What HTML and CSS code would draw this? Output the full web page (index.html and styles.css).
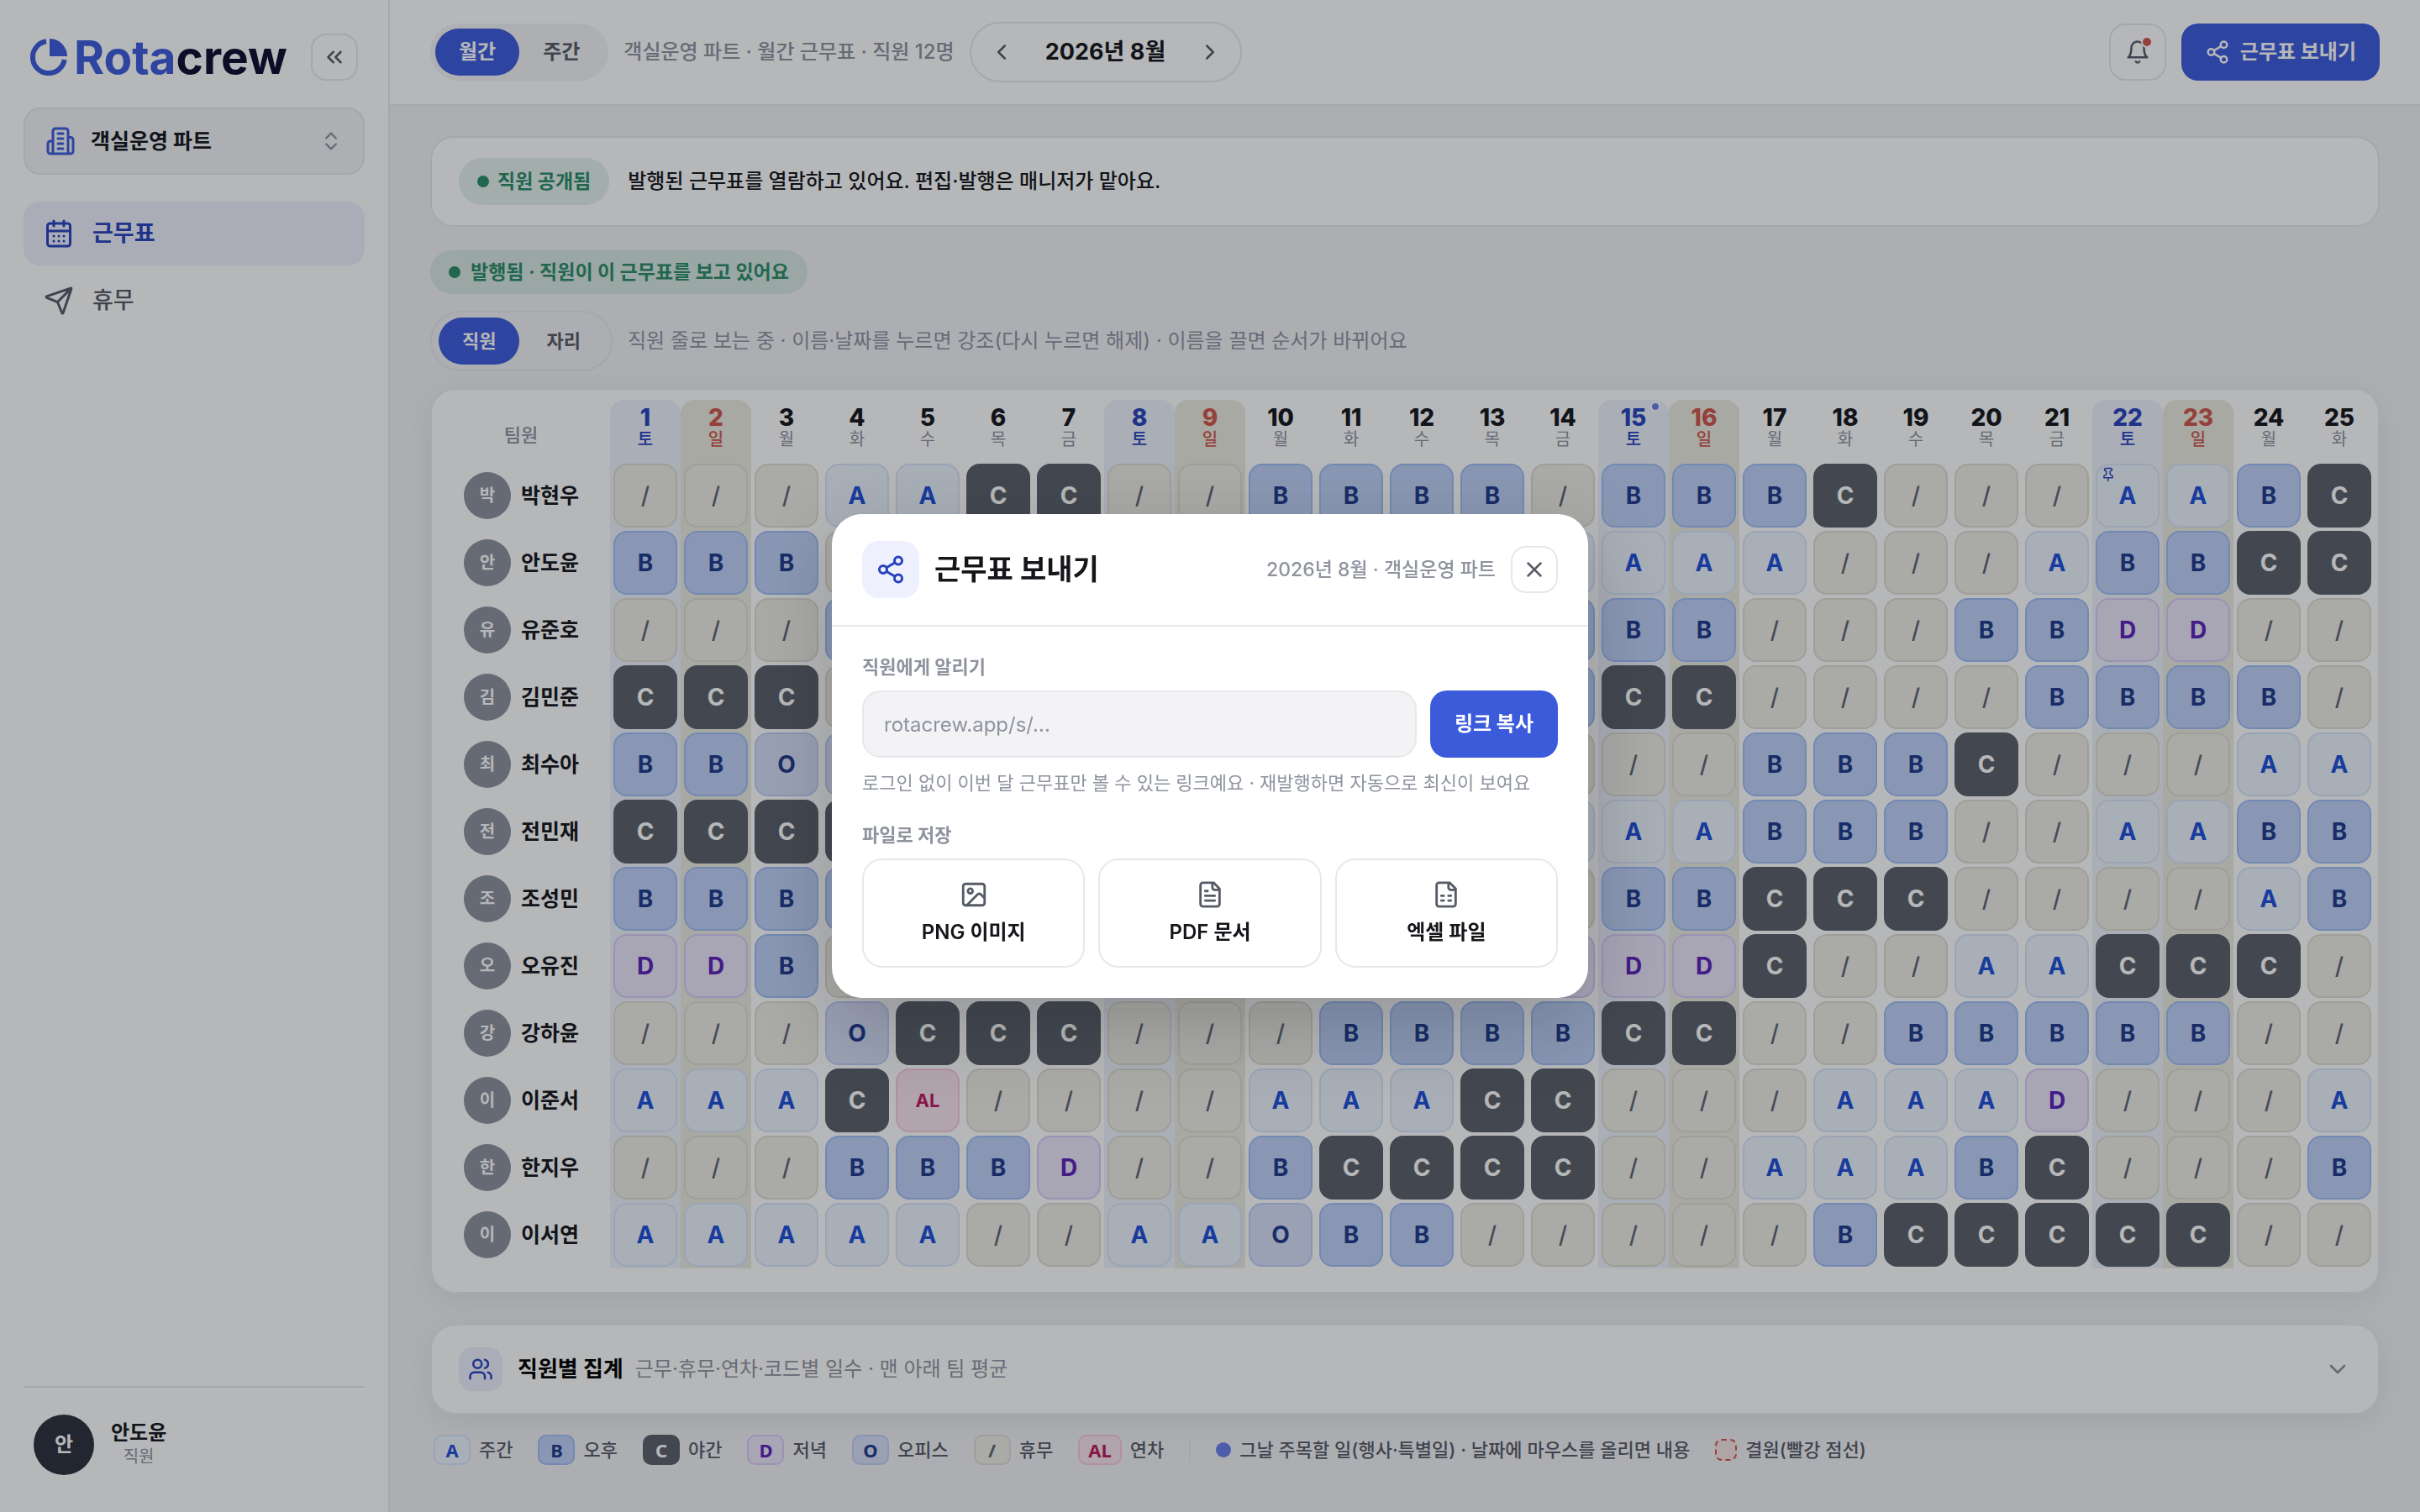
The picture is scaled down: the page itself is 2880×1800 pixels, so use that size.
FILE: index.html
```html
<!DOCTYPE html>
<html lang="ko">
<head>
  <meta charset="UTF-8" />
  <meta name="viewport" content="width=device-width, initial-scale=1" />
  <title>Rotacrew - 근무표</title>
  <link rel="stylesheet" href="styles.css">
</head>
<body>

<svg width="0" height="0" class="sprite" aria-hidden="true">
  <symbol id="i-share" viewBox="0 0 24 24"><circle cx="18" cy="5" r="3"/><circle cx="6" cy="12" r="3"/><circle cx="18" cy="19" r="3"/><path d="M8.6 13.5l6.8 4M15.4 6.5l-6.8 4"/></symbol>
  <symbol id="i-building" viewBox="0 0 24 24"><path d="M6 22V4a2 2 0 0 1 2-2h8a2 2 0 0 1 2 2v18zM6 12H4a2 2 0 0 0-2 2v6a2 2 0 0 0 2 2h2M18 9h2a2 2 0 0 1 2 2v9a2 2 0 0 1-2 2h-2M10 6h4M10 10h4M10 14h4M10 18h4"/></symbol>
  <symbol id="i-updown" viewBox="0 0 24 24"><path d="M7 15l5 5 5-5M7 9l5-5 5 5"/></symbol>
  <symbol id="i-calendar" viewBox="0 0 24 24"><rect x="3" y="4" width="18" height="18" rx="2"/><path d="M8 2v4M16 2v4M3 10h18M8 14h.01M12 14h.01M16 14h.01M8 18h.01M12 18h.01M16 18h.01"/></symbol>
  <symbol id="i-send" viewBox="0 0 24 24"><path d="M14.5 21.7a.5.5 0 0 0 .9 0l6.500-19a.5.5 0 0 0-.6-.6l-19 6.500a.5.5 0 0 0 0 .9l7.900 3.200a2 2 0 0 1 1.100 1.100zM21.900 2.100l-10.900 10.900"/></symbol>
  <symbol id="i-collapse" viewBox="0 0 24 24"><path d="M11 17l-5-5 5-5M18 17l-5-5 5-5"/></symbol>
  <symbol id="i-left" viewBox="0 0 24 24"><path d="M15 18l-6-6 6-6"/></symbol>
  <symbol id="i-right" viewBox="0 0 24 24"><path d="M9 18l6-6-6-6"/></symbol>
  <symbol id="i-down" viewBox="0 0 24 24"><path d="M6 9l6 6 6-6"/></symbol>
  <symbol id="i-bell" viewBox="0 0 24 24"><path d="M6 8a6 6 0 0 1 12 0c0 7 3 9 3 9H3s3-2 3-9M10.300 21a1.940 1.940 0 0 0 3.400 0"/></symbol>
  <symbol id="i-users" viewBox="0 0 24 24"><path d="M16 21v-2a4 4 0 0 0-4-4H6a4 4 0 0 0-4 4v2"/><circle cx="9" cy="7" r="4"/><path d="M22 21v-2a4 4 0 0 0-3-3.900M16 3.100a4 4 0 0 1 0 7.800"/></symbol>
  <symbol id="i-close" viewBox="0 0 24 24"><path d="M18 6L6 18M6 6l12 12"/></symbol>
  <symbol id="i-image" viewBox="0 0 24 24"><rect x="3" y="3" width="18" height="18" rx="2"/><circle cx="9" cy="9" r="2"/><path d="M21 15l-3.100-3.100a2 2 0 0 0-2.800 0L6 21"/></symbol>
  <symbol id="i-doc" viewBox="0 0 24 24"><path d="M15 2H6a2 2 0 0 0-2 2v16a2 2 0 0 0 2 2h12a2 2 0 0 0 2-2V7zM14 2v4a2 2 0 0 0 2 2h4M10 9H8M16 13H8M16 17H8"/></symbol>
  <symbol id="i-sheet" viewBox="0 0 24 24"><path d="M15 2H6a2 2 0 0 0-2 2v16a2 2 0 0 0 2 2h12a2 2 0 0 0 2-2V7zM14 2v4a2 2 0 0 0 2 2h4M8 13h2M14 13h2M8 17h2M14 17h2"/></symbol>
  <symbol id="i-pin" viewBox="0 0 24 24"><path d="M12 17v5M9 10.800a2 2 0 0 1-1.100 1.800l-1.800.9A2 2 0 0 0 5 15.200V16a1 1 0 0 0 1 1h12a1 1 0 0 0 1-1v-.8a2 2 0 0 0-1.100-1.700l-1.800-.9A2 2 0 0 1 15 10.800V7a1 1 0 0 1 1-1 2 2 0 0 0 0-4H8a2 2 0 0 0 0 4 1 1 0 0 1 1 1z"/></symbol>
</svg>

<div class="app">
  <aside class="sidebar">
    <div class="brand">
      <svg class="brand-mark" viewBox="0 0 44 44" aria-hidden="true">
        <path d="M19 3.300A19 19 0 1 0 40.700 25" fill="none" stroke="currentColor" stroke-width="6"/>
        <path d="M23 0A21 21 0 0 1 44 21H23z" fill="currentColor"/>
      </svg>
      <span class="brand-name"><span class="brand-blue">Rota</span>crew</span>
      <button type="button" class="icon-btn collapse" aria-label="메뉴 접기"><svg class="icon i30"><use href="#i-collapse"/></svg></button>
    </div>

    <button type="button" class="part-picker">
      <svg class="icon i36 blue"><use href="#i-building"/></svg>
      <span>객실운영 파트</span>
      <svg class="icon i28 muted push"><use href="#i-updown"/></svg>
    </button>

    <nav class="nav">
      <a href="#" class="nav-item active"><svg class="icon i36"><use href="#i-calendar"/></svg>근무표</a>
      <a href="#" class="nav-item"><svg class="icon i36"><use href="#i-send"/></svg>휴무</a>
    </nav>

    <div class="side-foot">
      <button type="button" class="me">
        <span class="me-avatar">안</span>
        <span class="me-text"><span class="me-name">안도윤</span><span class="me-role">직원</span></span>
      </button>
    </div>
  </aside>

  <div class="main">
    <header class="topbar">
      <div class="seg seg-soft">
        <button type="button" class="seg-btn on">월간</button>
        <button type="button" class="seg-btn">주간</button>
      </div>
      <span class="topbar-info">객실운영 파트 · 월간 근무표 · 직원 12명</span>
      <div class="month">
        <button type="button" class="month-btn" aria-label="이전 달"><svg class="icon i30"><use href="#i-left"/></svg></button>
        <span class="month-label">2026년 8월</span>
        <button type="button" class="month-btn" aria-label="다음 달"><svg class="icon i30"><use href="#i-right"/></svg></button>
      </div>
      <button type="button" class="icon-btn bell push" aria-label="알림"><svg class="icon i30"><use href="#i-bell"/></svg><span class="bell-dot"></span></button>
      <button type="button" class="primary share-btn"><svg class="icon i30"><use href="#i-share"/></svg>근무표 보내기</button>
    </header>

    <main class="content">
      <section class="banner">
        <span class="pill pill-open"><i class="dot"></i>직원 공개됨</span>
        <span class="banner-text">발행된 근무표를 열람하고 있어요. 편집·발행은 매니저가 맡아요.</span>
      </section>

      <span class="pill pill-published"><i class="dot"></i>발행됨 · 직원이 이 근무표를 보고 있어요</span>

      <div class="view-row">
        <div class="seg seg-line">
          <button type="button" class="seg-btn on">직원</button>
          <button type="button" class="seg-btn">자리</button>
        </div>
        <span class="hint">직원 줄로 보는 중 · 이름·날짜를 누르면 강조(다시 누르면 해제) · 이름을 끌면 순서가 바뀌어요</span>
      </div>

      <section class="card roster-card">
        <table class="roster">
          <thead><tr id="rosterHead"><th class="name-col" scope="col">팀원</th></tr></thead>
          <tbody id="rosterBody"></tbody>
        </table>
      </section>

      <button type="button" class="card summary">
        <span class="summary-icon"><svg class="icon i30"><use href="#i-users"/></svg></span>
        <span class="summary-title">직원별 집계</span>
        <span class="summary-sub">근무·휴무·연차·코드별 일수 · 맨 아래 팀 평균</span>
        <svg class="icon i32 muted push"><use href="#i-down"/></svg>
      </button>

      <div class="legend">
        <span class="legend-item"><span class="chip code-A">A</span>주간</span>
        <span class="legend-item"><span class="chip code-B">B</span>오후</span>
        <span class="legend-item"><span class="chip code-C">C</span>야간</span>
        <span class="legend-item"><span class="chip code-D">D</span>저녁</span>
        <span class="legend-item"><span class="chip code-O">O</span>오피스</span>
        <span class="legend-item"><span class="chip code-off">/</span>휴무</span>
        <span class="legend-item"><span class="chip code-AL">AL</span>연차</span>
        <span class="legend-sep"></span>
        <span class="legend-item"><i class="event-dot"></i>그날 주목할 일(행사·특별일) · 날짜에 마우스를 올리면 내용</span>
        <span class="legend-item"><i class="missing-box"></i>결원(빨강 점선)</span>
      </div>
    </main>
  </div>
</div>

<div class="backdrop">
  <div class="modal" role="dialog" aria-modal="true" aria-labelledby="modalTitle">
    <div class="modal-head">
      <span class="modal-icon"><svg class="icon i36"><use href="#i-share"/></svg></span>
      <h2 id="modalTitle">근무표 보내기</h2>
      <span class="modal-meta push">2026년 8월 · 객실운영 파트</span>
      <button type="button" class="icon-btn" aria-label="닫기"><svg class="icon i30"><use href="#i-close"/></svg></button>
    </div>
    <div class="modal-body">
      <label class="field-label" for="shareLink">직원에게 알리기</label>
      <div class="link-row">
        <input type="text" id="shareLink" placeholder="rotacrew.app/s/..." readonly>
        <button type="button" class="primary copy-btn">링크 복사</button>
      </div>
      <p class="help">로그인 없이 이번 달 근무표만 볼 수 있는 링크예요 · 재발행하면 자동으로 최신이 보여요</p>
      <p class="field-label">파일로 저장</p>
      <div class="files">
        <button type="button" class="file-btn"><svg class="icon i34"><use href="#i-image"/></svg>PNG 이미지</button>
        <button type="button" class="file-btn"><svg class="icon i34"><use href="#i-doc"/></svg>PDF 문서</button>
        <button type="button" class="file-btn"><svg class="icon i34"><use href="#i-sheet"/></svg>엑셀 파일</button>
      </div>
    </div>
  </div>
</div>

<script src="script.js"></script>
</body>
</html>
```

FILE: styles.css
```css
:root {
  --bg: #f2f2f5;
  --line: #e7e8ec;
  --ink: #14161a;
  --sub: #565b66;
  --muted: #8e939e;
  --primary: #3b5bdb;
  --primary-deep: #2742bd;
  --primary-soft: #eef0fd;
  --green: #2b8c68;
  --red: #d0564b;
}
* {
  box-sizing: border-box;
}
body {
  margin: 0;
  background: var(--bg);
  color: var(--ink);
  font-family: Inter, "Noto Sans CJK KR", sans-serif;
  font-size: 24px;
  line-height: 32px;
}
button, input {
  font: inherit;
  color: inherit;
}
button {
  padding: 0;
  border: none;
  background: none;
  cursor: pointer;
}
p, h2 {
  margin: 0;
}
.sprite {
  position: absolute;
}
.icon {
  flex: none;
  fill: none;
  stroke: currentColor;
  stroke-width: 2;
  stroke-linecap: round;
  stroke-linejoin: round;
}
.i28 { width: 28px; height: 28px; }
.i30 { width: 30px; height: 30px; }
.i32 { width: 32px; height: 32px; }
.i34 { width: 34px; height: 34px; }
.i36 { width: 36px; height: 36px; }
.blue { color: var(--primary); }
.muted { color: var(--muted); }
.push { margin-left: auto; }

.app {
  display: flex;
  min-height: 100vh;
}

/* sidebar */
.sidebar {
  flex: none;
  width: 464px;
  display: flex;
  flex-direction: column;
  padding: 40px 28px 32px;
  background: #fff;
  border-right: 2px solid var(--line);
}
.brand {
  display: flex;
  align-items: center;
  padding: 0 8px;
  margin-bottom: 32px;
}
.brand-mark {
  width: 44px;
  height: 44px;
  margin-right: 8px;
  color: var(--primary);
}
.brand-name {
  font-size: 55px;
  line-height: 56px;
  font-weight: 700;
  color: #0c0d2e;
}
.brand-blue {
  color: var(--primary);
}
.icon-btn {
  flex: none;
  display: flex;
  align-items: center;
  justify-content: center;
  width: 56px;
  height: 56px;
  border: 2px solid var(--line);
  border-radius: 18px;
  background: #fff;
  color: var(--sub);
}
.collapse {
  margin-left: auto;
}
.part-picker {
  display: flex;
  align-items: center;
  gap: 18px;
  height: 80px;
  padding: 0 24px;
  border: 2px solid var(--line);
  border-radius: 20px;
  background: #f3f4f6;
  font-size: 25px;
  font-weight: 700;
}
.nav {
  display: flex;
  flex-direction: column;
  gap: 4px;
  margin-top: 32px;
}
.nav-item {
  display: flex;
  align-items: center;
  gap: 22px;
  height: 76px;
  padding: 0 24px;
  border-radius: 20px;
  color: var(--sub);
  font-size: 27px;
  font-weight: 500;
  text-decoration: none;
}
.nav-item.active {
  background: var(--primary-soft);
  color: var(--primary-deep);
  font-weight: 700;
}
.side-foot {
  margin-top: auto;
  padding-top: 20px;
  border-top: 2px solid var(--line);
}
.me {
  display: flex;
  align-items: center;
  gap: 20px;
  padding: 12px;
}
.me-avatar {
  display: flex;
  align-items: center;
  justify-content: center;
  width: 72px;
  height: 72px;
  border-radius: 50%;
  background: #2b303b;
  color: #fff;
  font-weight: 700;
}
.me-text {
  display: flex;
  flex-direction: column;
  align-items: center;
  line-height: 28px;
}
.me-name {
  font-weight: 700;
}
.me-role {
  font-size: 20px;
  color: var(--muted);
}

/* top bar */
.main {
  flex: 1;
  min-width: 0;
}
.topbar {
  display: flex;
  align-items: center;
  gap: 18px;
  height: 126px;
  padding: 0 48px;
  background: #fff;
  border-bottom: 2px solid var(--line);
}
.seg {
  flex: none;
  display: flex;
  border-radius: 36px;
}
.seg-soft {
  padding: 6px;
  background: #f3f4f6;
}
.seg-line {
  gap: 4px;
  padding: 6px 8px;
  border: 2px solid var(--line);
  font-size: 22px;
}
.seg-btn {
  height: 56px;
  padding: 0 28px;
  border-radius: 28px;
  color: var(--sub);
  font-weight: 600;
}
.seg-btn.on {
  background: var(--primary);
  color: #fff;
  font-weight: 700;
}
.topbar-info {
  color: var(--muted);
  font-weight: 500;
}
.month {
  display: flex;
  align-items: center;
  height: 72px;
  padding: 0 8px;
  border: 2px solid var(--line);
  border-radius: 36px;
}
.month-btn {
  display: flex;
  align-items: center;
  justify-content: center;
  width: 56px;
  height: 56px;
  color: var(--sub);
}
.month-label {
  min-width: 192px;
  text-align: center;
  font-size: 27px;
  font-weight: 700;
}
.bell {
  position: relative;
  width: 68px;
  height: 68px;
  border-radius: 20px;
}
.bell-dot {
  position: absolute;
  top: 13px;
  right: 14px;
  width: 14px;
  height: 14px;
  border: 2px solid #fff;
  border-radius: 50%;
  background: var(--red);
}
.primary {
  border-radius: 20px;
  background: var(--primary);
  color: #fff;
  font-weight: 700;
}
.share-btn {
  display: flex;
  align-items: center;
  gap: 12px;
  height: 68px;
  padding: 0 28px;
}

/* content */
.content {
  padding: 36px 48px 48px;
}
.banner {
  display: flex;
  align-items: center;
  gap: 22px;
  height: 108px;
  padding: 0 32px;
  border: 2px solid var(--line);
  border-radius: 28px;
  background: #fff;
}
.banner-text {
  font-weight: 500;
}
.pill {
  display: inline-flex;
  align-items: center;
  border-radius: 28px;
  color: var(--green);
  font-size: 23px;
  font-weight: 700;
}
.pill-open {
  gap: 10px;
  height: 56px;
  padding: 0 22px;
  background: #e4f1ec;
}
.pill-published {
  display: flex;
  width: fit-content;
  gap: 12px;
  height: 52px;
  margin-top: 28px;
  padding: 0 22px;
  background: #d9e8e3;
}
.dot {
  width: 14px;
  height: 14px;
  border-radius: 50%;
  background: currentColor;
}
.view-row {
  display: flex;
  align-items: center;
  gap: 18px;
  margin: 20px 0;
}
.hint {
  color: var(--muted);
}
.card {
  border: 2px solid #ebecef;
  border-radius: 30px;
  background: #fff;
  box-shadow: 0 8px 32px rgba(20, 22, 26, 0.07);
}

/* roster */
.roster-card {
  overflow: hidden;
  padding: 12px 4px 28px 0;
}
.roster {
  width: 100%;
  table-layout: fixed;
  border-collapse: collapse;
}
.roster th, .roster td {
  padding: 0;
  font-weight: 400;
}
.roster thead th {
  height: 74px;
  vertical-align: top;
}
.roster tbody td, .roster tbody th {
  height: 80px;
}
.roster .name-col {
  width: 212px;
  padding-top: 26px;
  color: var(--muted);
  font-size: 22px;
  font-weight: 500;
}
.sat { background: #eef2fb; }
.sun { background: #ecebe0; }
thead .sat, thead .sun {
  border-radius: 16px 16px 0 0;
}
.day {
  position: relative;
  padding-top: 7px;
}
.day-num {
  display: block;
  line-height: 28px;
  font-size: 28px;
  font-weight: 800;
}
.day-name {
  display: block;
  line-height: 24px;
  font-size: 20px;
  color: var(--muted);
}
.sat .day-num, .sat .day-name { color: var(--primary-deep); }
.sun .day-num, .sun .day-name { color: var(--red); }
.sat .day-name, .sun .day-name { font-weight: 500; }
.day-event {
  position: absolute;
  top: 2px;
  right: 10px;
  width: 12px;
  height: 12px;
  border: 2px solid #fff;
  border-radius: 50%;
  background: #6b7fe8;
}
.person {
  display: flex;
  align-items: center;
  gap: 12px;
  padding-left: 38px;
  font-size: 25px;
  font-weight: 600;
}
.avatar {
  display: flex;
  align-items: center;
  justify-content: center;
  width: 56px;
  height: 56px;
  border-radius: 50%;
  background: #8b919d;
  color: #fff;
  font-size: 20px;
}
.chip, .shift {
  border: 2px solid;
  font-weight: 700;
}
.shift {
  position: relative;
  display: flex;
  align-items: center;
  justify-content: center;
  height: 76px;
  margin: 0 4px;
  border-radius: 16px;
  font-size: 28px;
}
.chip {
  min-width: 44px;
  height: 36px;
  padding: 0 10px;
  border-radius: 10px;
  font-family: "Noto Sans", sans-serif;
  line-height: 32px;
  text-align: center;
}
.code-A { background: #ecf4fc; border-color: #d6e4f8; color: #1d4ed8; }
.code-B { background: #bfd2f8; border-color: #a0bef5; color: #1e3a8a; }
.code-C { background: #5b6069; border-color: #5b6069; color: #fff; }
.code-D { background: #ebe5fa; border-color: #d8caf6; color: #5b21b6; }
.code-O { background: #d8e0f8; border-color: #bfcef6; color: #1e3a8a; }
.code-off { background: #eeeee5; border-color: #dedbd0; color: #5f6473; }
.code-AL { background: #f9e4ec; border-color: #f9c9da; color: #be185d; }
.shift.code-off { font-weight: 500; }
.shift.code-AL { font-size: 22px; }
.shift-pin {
  position: absolute;
  top: 2px;
  left: 4px;
  width: 18px;
  height: 18px;
  color: var(--primary-deep);
}

/* summary + legend */
.summary {
  display: flex;
  align-items: center;
  width: 100%;
  height: 108px;
  margin-top: 36px;
  padding: 0 32px;
}
.summary-icon {
  display: flex;
  align-items: center;
  justify-content: center;
  width: 52px;
  height: 52px;
  margin-right: 18px;
  border-radius: 16px;
  background: var(--primary-soft);
  color: var(--primary-deep);
}
.summary-title {
  margin-right: 14px;
  color: #000;
  font-size: 26px;
  font-weight: 700;
}
.summary-sub {
  color: var(--muted);
}
.legend {
  display: flex;
  align-items: center;
  flex-wrap: wrap;
  gap: 30px;
  padding: 24px 4px 0;
  color: var(--sub);
  font-size: 22px;
  font-weight: 500;
  line-height: 36px;
}
.legend-item {
  display: flex;
  align-items: center;
  gap: 10px;
}
.legend-sep {
  width: 2px;
  height: 28px;
  background: var(--line);
}
.event-dot {
  width: 18px;
  height: 18px;
  border-radius: 50%;
  background: #6b7fe8;
}
.missing-box {
  width: 26px;
  height: 26px;
  border: 2px dashed var(--red);
  border-radius: 8px;
  background: #f5e4e4;
}

/* share modal */
.backdrop {
  position: fixed;
  inset: 0;
  display: flex;
  align-items: center;
  justify-content: center;
  background: rgba(13, 16, 22, 0.3);
}
.modal {
  width: 900px;
  max-width: 90vw;
  border-radius: 36px;
  background: #fff;
  box-shadow: 0 32px 96px rgba(13, 16, 22, 0.2);
}
.modal-head {
  display: flex;
  align-items: center;
  gap: 18px;
  padding: 32px 36px;
  border-bottom: 2px solid var(--line);
}
.modal-icon {
  display: flex;
  align-items: center;
  justify-content: center;
  width: 68px;
  height: 68px;
  border-radius: 20px;
  background: var(--primary-soft);
  color: var(--primary-deep);
}
.modal-head h2 {
  font-size: 34px;
  line-height: 44px;
  font-weight: 700;
}
.modal-meta {
  color: var(--muted);
  font-size: 23px;
  font-weight: 500;
}
.modal-body {
  padding: 32px 36px 36px;
}
.field-label {
  display: block;
  margin-bottom: 12px;
  color: var(--muted);
  font-size: 22px;
  font-weight: 700;
}
.link-row {
  display: flex;
  gap: 16px;
}
.link-row input {
  flex: 1;
  min-width: 0;
  height: 80px;
  padding: 0 24px;
  border: 2px solid var(--line);
  border-radius: 22px;
  background: #f3f3f6;
}
.link-row input::placeholder {
  color: var(--muted);
  opacity: 1;
}
.copy-btn {
  min-width: 152px;
  padding: 0 24px;
}
.help {
  margin: 14px 0 30px;
  color: var(--muted);
  font-size: 22px;
}
.files {
  display: grid;
  grid-template-columns: repeat(3, 1fr);
  gap: 16px;
}
.file-btn {
  display: flex;
  flex-direction: column;
  align-items: center;
  justify-content: center;
  gap: 12px;
  height: 130px;
  border: 2px solid var(--line);
  border-radius: 24px;
  font-weight: 600;
}
.file-btn .icon {
  color: var(--sub);
}
```

FILE: script.js
```js
const WEEK = ['토', '일', '월', '화', '수', '목', '금'];
const DAYS = 25;
const EVENT_DAY = 15;

// one letter per day, L = AL
const roster = [
  { name: '박현우', codes: '///AACC//BBBB/BBBC///AABC', pin: 22 },
  { name: '안도윤', codes: 'BBB/AAA/BBCC/AAAA///ABBCC' },
  { name: '유준호', codes: '///BBBB//CC/BBBB///BBDD//' },
  { name: '김민준', codes: 'CCC//AAABB//BBCC////BBBB/' },
  { name: '최수아', codes: 'BBOOBB//AAAA////BBBC///AA' },
  { name: '전민재', codes: 'CCCC//BBB//AAAAABBB//AABB' },
  { name: '조성민', codes: 'BBBBCC//AABB//BBCCC////AB' },
  { name: '오유진', codes: 'DDB//AABBCC//DDDC//AACCC/' },
  { name: '강하윤', codes: '///OCCC///BBBBCC//BBBBB//' },
  { name: '이준서', codes: 'AAACL////AAACC///AAAD///A' },
  { name: '한지우', codes: '///BBBD//BCCCC//AAABC///B' },
  { name: '이서연', codes: 'AAAAA//AAOBB/////BCCCCC//' }
];

function dayClass(i) {
  if (i % 7 === 0) return 'sat';
  if (i % 7 === 1) return 'sun';
  return '';
}

function renderHead() {
  const head = document.getElementById('rosterHead');
  for (let i = 0; i < DAYS; i++) {
    const th = document.createElement('th');
    th.scope = 'col';
    th.className = dayClass(i);
    const dot = i + 1 === EVENT_DAY ? '<i class="day-event"></i>' : '';
    th.innerHTML = `<div class="day"><span class="day-num">${i + 1}</span><span class="day-name">${WEEK[i % 7]}</span>${dot}</div>`;
    head.appendChild(th);
  }
}

function renderBody() {
  const body = document.getElementById('rosterBody');
  roster.forEach(p => {
    const tr = document.createElement('tr');
    tr.innerHTML = `<th scope="row"><div class="person"><span class="avatar">${p.name[0]}</span>${p.name}</div></th>`;
    [...p.codes].forEach((c, i) => {
      const code = c === 'L' ? 'AL' : c;
      const cls = code === '/' ? 'off' : code;
      const pin = p.pin === i + 1 ? '<svg class="icon shift-pin"><use href="#i-pin"/></svg>' : '';
      const td = document.createElement('td');
      td.className = dayClass(i);
      td.innerHTML = `<div class="shift code-${cls}">${code}${pin}</div>`;
      tr.appendChild(td);
    });
    body.appendChild(tr);
  });
}

renderHead();
renderBody();
```
